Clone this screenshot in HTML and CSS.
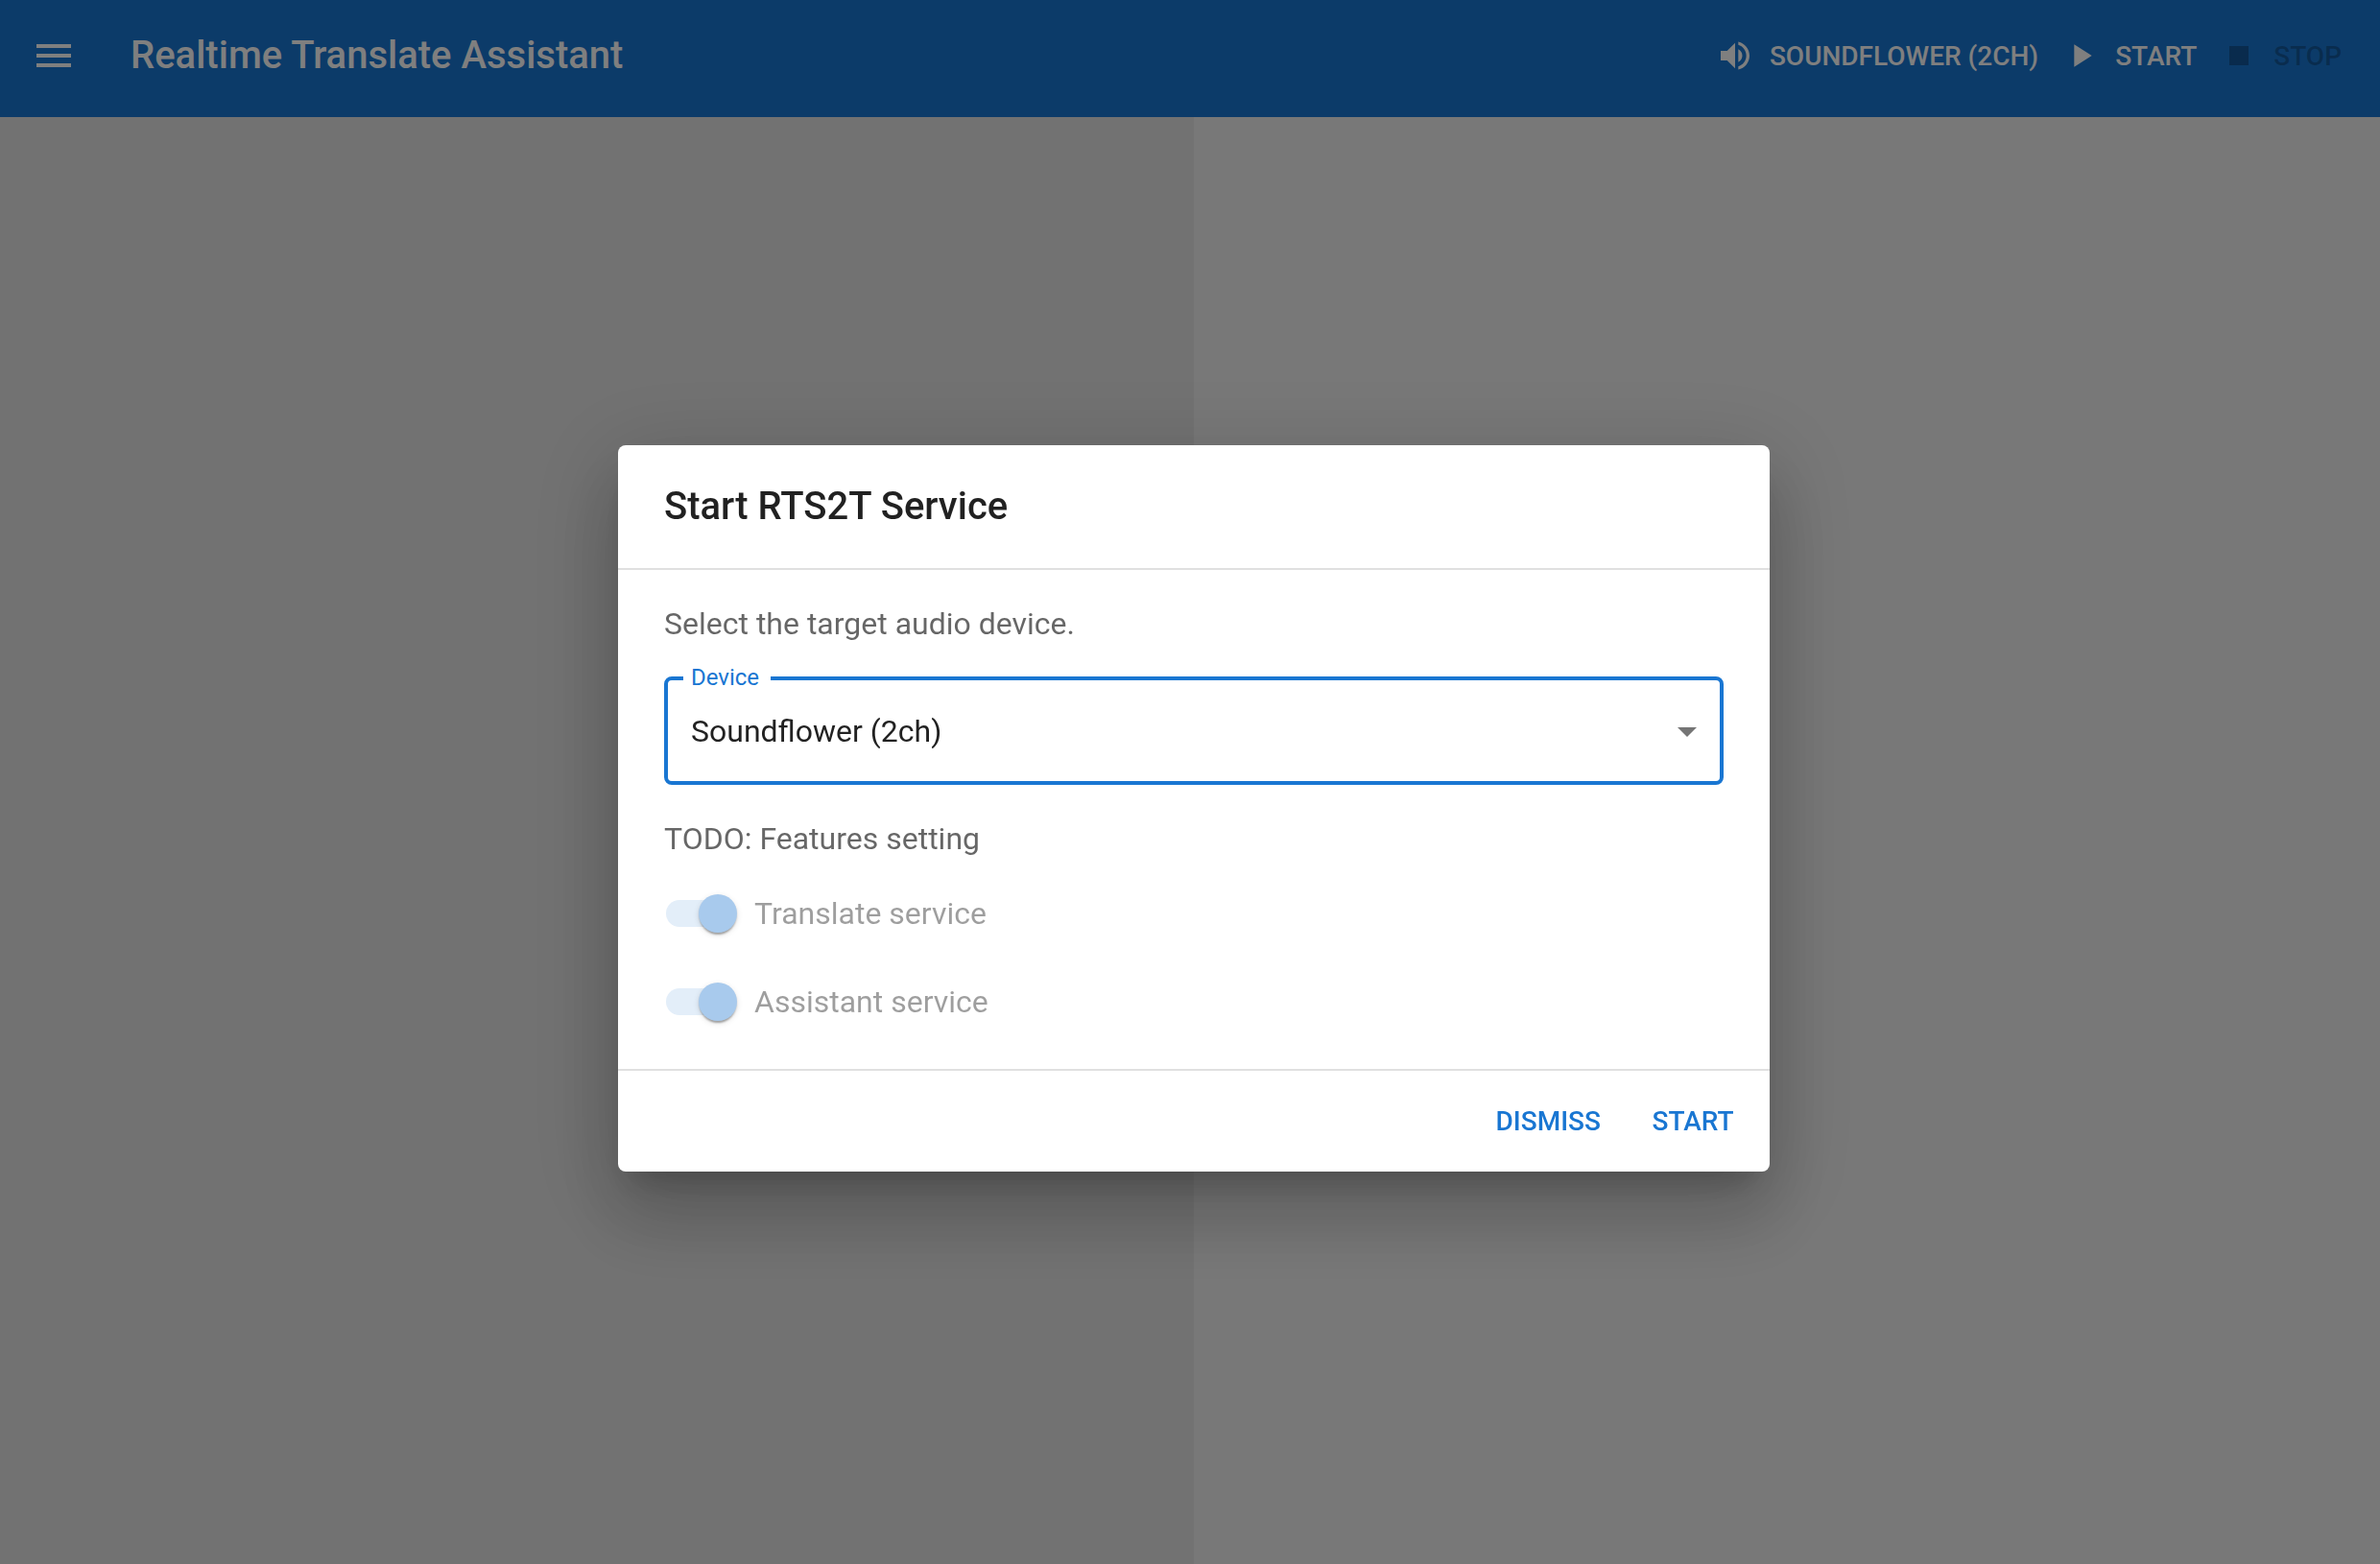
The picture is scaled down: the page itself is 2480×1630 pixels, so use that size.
FILE: index.html
```html
<!DOCTYPE html>
<html lang="en">
<head>
  <meta charset="utf-8">
  <meta name="viewport" content="width=device-width, initial-scale=1">
  <title>Realtime Translate Assistant</title>
  <link rel="stylesheet" href="styles.css">
</head>
<body>
  <div class="app">
    <header class="app-bar">
      <button class="icon-button" type="button" aria-label="Open menu">
        <svg class="icon icon-large" viewBox="0 0 24 24" aria-hidden="true"><path d="M3 18h18v-2H3v2zm0-5h18v-2H3v2zm0-7v2h18V6H3z"/></svg>
      </button>
      <h1 class="app-title">Realtime Translate Assistant</h1>
      <div class="app-actions">
        <button class="button bar-button" type="button">
          <svg class="icon" viewBox="0 0 24 24" aria-hidden="true"><path d="M3 9v6h4l5 5V4L7 9H3zm13.5 3c0-1.77-1.02-3.29-2.5-4.03v8.05c1.48-.73 2.5-2.25 2.5-4.02zM14 3.23v2.06c2.89.86 5 3.54 5 6.71s-2.11 5.85-5 6.71v2.06c4.01-.91 7-4.49 7-8.77s-2.99-7.86-7-8.77z"/></svg>
          SOUNDFLOWER (2CH)
        </button>
        <button class="button bar-button" type="button">
          <svg class="icon" viewBox="0 0 24 24" aria-hidden="true"><path d="M8 5v14l11-7z"/></svg>
          START
        </button>
        <button class="button bar-button" type="button" disabled>
          <svg class="icon" viewBox="0 0 24 24" aria-hidden="true"><path d="M6 6h12v12H6z"/></svg>
          STOP
        </button>
      </div>
    </header>
    <main class="panes">
      <section class="pane pane-source" aria-label="Transcript"></section>
      <section class="pane pane-target" aria-label="Translation"></section>
    </main>
  </div>

  <div class="backdrop">
    <form class="dialog" role="dialog" aria-modal="true" aria-labelledby="dialog-title">
      <h2 class="dialog-title" id="dialog-title">Start RTS2T Service</h2>
      <div class="dialog-content">
        <p class="dialog-text">Select the target audio device.</p>
        <div class="field">
          <label class="field-label" for="device">Device</label>
          <select class="field-select" id="device">
            <option>Soundflower (2ch)</option>
          </select>
          <svg class="icon icon-large field-arrow" viewBox="0 0 24 24" aria-hidden="true"><path d="M7 10l5 5 5-5z"/></svg>
        </div>
        <p class="dialog-text">TODO: Features setting</p>
        <div class="switches">
          <label class="switch-row"><input class="switch" type="checkbox" checked disabled>Translate service</label>
          <label class="switch-row"><input class="switch" type="checkbox" checked disabled>Assistant service</label>
        </div>
      </div>
      <div class="dialog-actions">
        <button class="button text-button" type="button">DISMISS</button>
        <button class="button text-button" type="submit">START</button>
      </div>
    </form>
  </div>
</body>
</html>
```
FILE: styles.css
```css
:root {
  --primary: #1976d2;
  --divider: #e0e0e0;
}

* {
  box-sizing: border-box;
}

body {
  margin: 0;
  font-family: Roboto, "Liberation Sans", sans-serif;
  font-size: 32px;
  line-height: 48px;
}

h1,
h2,
p {
  margin: 0;
}

.app {
  display: flex;
  flex-direction: column;
  min-height: 100vh;
}

/* App bar */
.app-bar {
  display: flex;
  align-items: center;
  padding: 10px 24px 16px 8px;
  background: var(--primary);
  color: #fff;
}

.app-title {
  flex: 1;
  margin-left: 32px;
  font-size: 40px;
  font-weight: 500;
  line-height: 64px;
}

.app-actions {
  display: flex;
}

.icon {
  flex: none;
  width: 40px;
  height: 40px;
  fill: currentColor;
}

.icon-large {
  width: 48px;
  height: 48px;
}

.icon-button {
  display: flex;
  padding: 24px;
  border: 0;
  background: none;
  color: inherit;
}

.button {
  display: flex;
  align-items: center;
  justify-content: center;
  min-width: 128px;
  padding: 12px 16px;
  border: 0;
  border-radius: 8px;
  background: none;
  color: inherit;
  font: 500 28px/49px Roboto, "Liberation Sans", sans-serif;
}

.bar-button {
  gap: 16px;
  padding-left: 8px;
}

.bar-button:disabled {
  color: rgba(0, 0, 0, 0.26);
}

/* Panes behind the dialog */
.panes {
  display: flex;
  flex: 1;
}

.pane-source {
  flex: 0 0 calc(50% + 4px);
  background: #e4e4e4;
}

.pane-target {
  flex: 1;
  background: #f0f0f0;
}

/* Dialog */
.backdrop {
  position: fixed;
  inset: 0;
  display: flex;
  align-items: center;
  justify-content: center;
  padding: 55px 0 0 8px;
  background: rgba(0, 0, 0, 0.5);
}

.dialog {
  width: 1200px;
  max-width: 100%;
  border-radius: 8px;
  background: #fff;
  color: rgba(0, 0, 0, 0.87);
  box-shadow:
    0 22px 30px -14px rgba(0, 0, 0, 0.2),
    0 48px 76px 6px rgba(0, 0, 0, 0.14),
    0 18px 92px 16px rgba(0, 0, 0, 0.12);
}

.dialog-title {
  padding: 32px 48px;
  font-size: 40px;
  font-weight: 500;
  line-height: 64px;
}

.dialog-content {
  padding: 32px 48px;
  border-top: 2px solid var(--divider);
  border-bottom: 2px solid var(--divider);
}

.dialog-text {
  color: rgba(0, 0, 0, 0.6);
}

.field {
  position: relative;
  margin: 31px 0 32px;
}

.field-label {
  position: absolute;
  top: -13px;
  left: 20px;
  padding: 0 12px 0 8px;
  background: #fff;
  color: var(--primary);
  font-size: 24px;
  line-height: 28px;
}

.field-select {
  display: block;
  width: 100%;
  height: 113px;
  padding: 0 64px 0 24px;
  border: 4px solid var(--primary);
  border-radius: 8px;
  outline: 0;
  appearance: none;
  background: #fff;
  color: inherit;
  font: inherit;
}

.field-arrow {
  position: absolute;
  top: 33px;
  right: 14px;
  color: rgba(0, 0, 0, 0.54);
  pointer-events: none;
}

.switches {
  display: flex;
  flex-direction: column;
  align-items: flex-start;
  gap: 16px;
  margin-top: 16px;
}

.switch-row {
  display: flex;
  align-items: center;
  gap: 24px;
  height: 76px;
  padding-left: 2px;
  color: rgba(0, 0, 0, 0.38);
}

/* The thumb is taller than the track and overhangs its right end */
.switch {
  display: flex;
  align-items: center;
  justify-content: flex-end;
  width: 68px;
  height: 28px;
  margin: 0;
  appearance: none;
  background: #e3eef9;
  border-radius: 14px;
}

.switch::before {
  content: "";
  flex: none;
  width: 40px;
  height: 40px;
  margin-right: -6px;
  border-radius: 50%;
  background: #a8caed;
  box-shadow:
    0 4px 2px -2px rgba(0, 0, 0, 0.2),
    0 2px 2px 0 rgba(0, 0, 0, 0.14),
    0 2px 6px 0 rgba(0, 0, 0, 0.12);
}

.dialog-actions {
  display: flex;
  justify-content: flex-end;
  gap: 16px;
  padding: 16px;
}

.text-button {
  color: var(--primary);
}
```
